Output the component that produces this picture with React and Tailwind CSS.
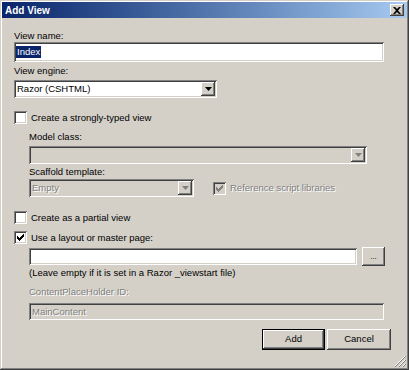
const sunken =
  'shadow-[inset_1px_1px_#808080,inset_-1px_-1px_#ffffff,inset_2px_2px_#404040,inset_-2px_-2px_#d4d0c8]';
const raised =
  'shadow-[inset_-1px_-1px_#404040,inset_1px_1px_#ffffff,inset_-2px_-2px_#808080,inset_2px_2px_#d4d0c8]';
const grayText = 'text-[#808080] [text-shadow:1px_1px_#ffffff]';

function Arrow({ disabled }) {
  return (
    <div className={`w-[14px] h-full bg-[#d4d0c8] ${raised} flex items-center justify-center`}>
      <svg width="7" height="4" viewBox="0 0 7 4">
        <path d="M0 0h7L3.5 4z" fill={disabled ? '#808080' : '#000000'} />
      </svg>
    </div>
  );
}

function Select({ value, width, disabled, className = '' }) {
  return (
    <div
      className={`h-[18px] p-[2px] flex ${sunken} ${disabled ? 'bg-[#d4d0c8]' : 'bg-white'} ${className}`}
      style={{ width }}
    >
      <div className={`flex-1 pl-[1px] leading-[14px] ${disabled ? grayText : 'text-black'}`}>{value}</div>
      <Arrow disabled={disabled} />
    </div>
  );
}

function Check({ checked, disabled }) {
  return (
    <div
      className={`w-[13px] h-[13px] shrink-0 flex items-center justify-center ${sunken} ${disabled ? 'bg-[#d4d0c8]' : 'bg-white'}`}
    >
      {checked && (
        <svg width="7" height="7" viewBox="0 0 7 7">
          <path
            d="M0 2h1v1h1v1h1V3h1V2h1V1h1V0h1v3H6v1H5v1H4v1H3v1H2V6H1V5H0z"
            fill={disabled ? '#808080' : '#000000'}
          />
        </svg>
      )}
    </div>
  );
}

function Label({ children, className = '', gray }) {
  return <div className={`leading-[12px] ${gray ? grayText : 'text-black'} ${className}`}>{children}</div>;
}

export default function App() {
  return (
    <div
      className={`w-[409px] h-[370px] bg-[#d4d0c8] pt-[2px] px-[2px] flex flex-col text-[9.5px] text-black shadow-[inset_-1px_-1px_#404040,inset_1px_1px_#d4d0c8,inset_-2px_-2px_#808080,inset_2px_2px_#ffffff] relative`}
      style={{ fontFamily: '"Liberation Sans", Arial, sans-serif' }}
    >
      <div className="h-[16px] bg-gradient-to-r from-[#0a246a] to-[#a6caf0] flex items-center pl-[3px] pr-[3px]">
        <span className="text-white font-bold text-[10px] flex-1">Add View</span>
        <div className={`w-[14px] h-[12px] bg-[#d4d0c8] ${raised} flex items-center justify-center`}>
          <svg width="8" height="7" viewBox="0 0 8 7">
            <path d="M0 0h2l2 2 2-2h2L5 3.5 8 7H6L4 5 2 7H0l3-3.5z" fill="#000000" />
          </svg>
        </div>
      </div>

      <div className="flex flex-col pl-[12px]">
        <Label className="mt-[12px]">View name:</Label>
        <div className={`w-[370px] h-[20px] bg-white p-[2px] ${sunken} flex items-center`}>
          <span className="bg-[#0a246a] text-white leading-[12px] px-[1px]">Index</span>
        </div>
        <Label className="mt-[3px]">View engine:</Label>
        <Select value="Razor (CSHTML)" width={203} className="mt-[3px]" />

        <div className="mt-[13px] flex items-center gap-[4px] h-[13px]">
          <Check />
          <span className="leading-[12px]">Create a strongly-typed view</span>
        </div>
        <div className="ml-[15px] flex flex-col">
          <Label className="mt-[7px]">Model class:</Label>
          <Select value="" width={338} disabled className="mt-[3px]" />
          <Label className="mt-[2px]">Scaffold template:</Label>
          <div className="mt-[1px] flex items-center">
            <Select value="Empty" width={165} disabled />
            <div className="ml-[19px] flex items-center gap-[4px]">
              <Check checked disabled />
              <span className={`leading-[12px] ${grayText}`}>Reference script libraries</span>
            </div>
          </div>
        </div>

        <div className="mt-[14px] flex items-center gap-[4px] h-[13px]">
          <Check />
          <span className="leading-[12px]">Create as a partial view</span>
        </div>
        <div className="mt-[7px] flex items-center gap-[4px] h-[13px]">
          <Check checked />
          <span className="leading-[12px]">Use a layout or master page:</span>
        </div>
        <div className="ml-[15px] flex flex-col">
          <div className="mt-[3px] flex items-center gap-[5px] h-[19px]">
            <div className={`w-[328px] h-[17px] bg-white ${sunken}`} />
            <div className={`w-[23px] h-[19px] bg-[#d4d0c8] ${raised} flex items-center justify-center leading-[10px] text-[8px]`}>
              ...
            </div>
          </div>
          <Label className="mt-[1px]">(Leave empty if it is set in a Razor _viewstart file)</Label>
          <Label gray className="mt-[7px]">ContentPlaceHolder ID:</Label>
          <div className={`mt-[5px] w-[355px] h-[17px] bg-[#d4d0c8] p-[2px] ${sunken} flex items-center`}>
            <span className={`leading-[12px] pl-[1px] ${grayText}`}>MainContent</span>
          </div>
        </div>

        <div className="mt-[9px] flex justify-end gap-[2px] pr-[16px]">
          <div className="w-[63px] h-[21px] border border-black">
            <div className={`w-full h-full bg-[#d4d0c8] ${raised} flex items-center justify-center`}>Add</div>
          </div>
          <div className={`w-[64px] h-[21px] bg-[#d4d0c8] ${raised} flex items-center justify-center`}>Cancel</div>
        </div>
      </div>

      <svg className="absolute right-[3px] bottom-[3px]" width="12" height="12" viewBox="0 0 12 12">
        <path d="M11 1L1 11M11 5L5 11M11 9L9 11" stroke="#ffffff" strokeWidth="1" />
        <path d="M12 1L1 12M12 5L5 12M12 9L9 12" stroke="#808080" strokeWidth="1" />
      </svg>
    </div>
  );
}
